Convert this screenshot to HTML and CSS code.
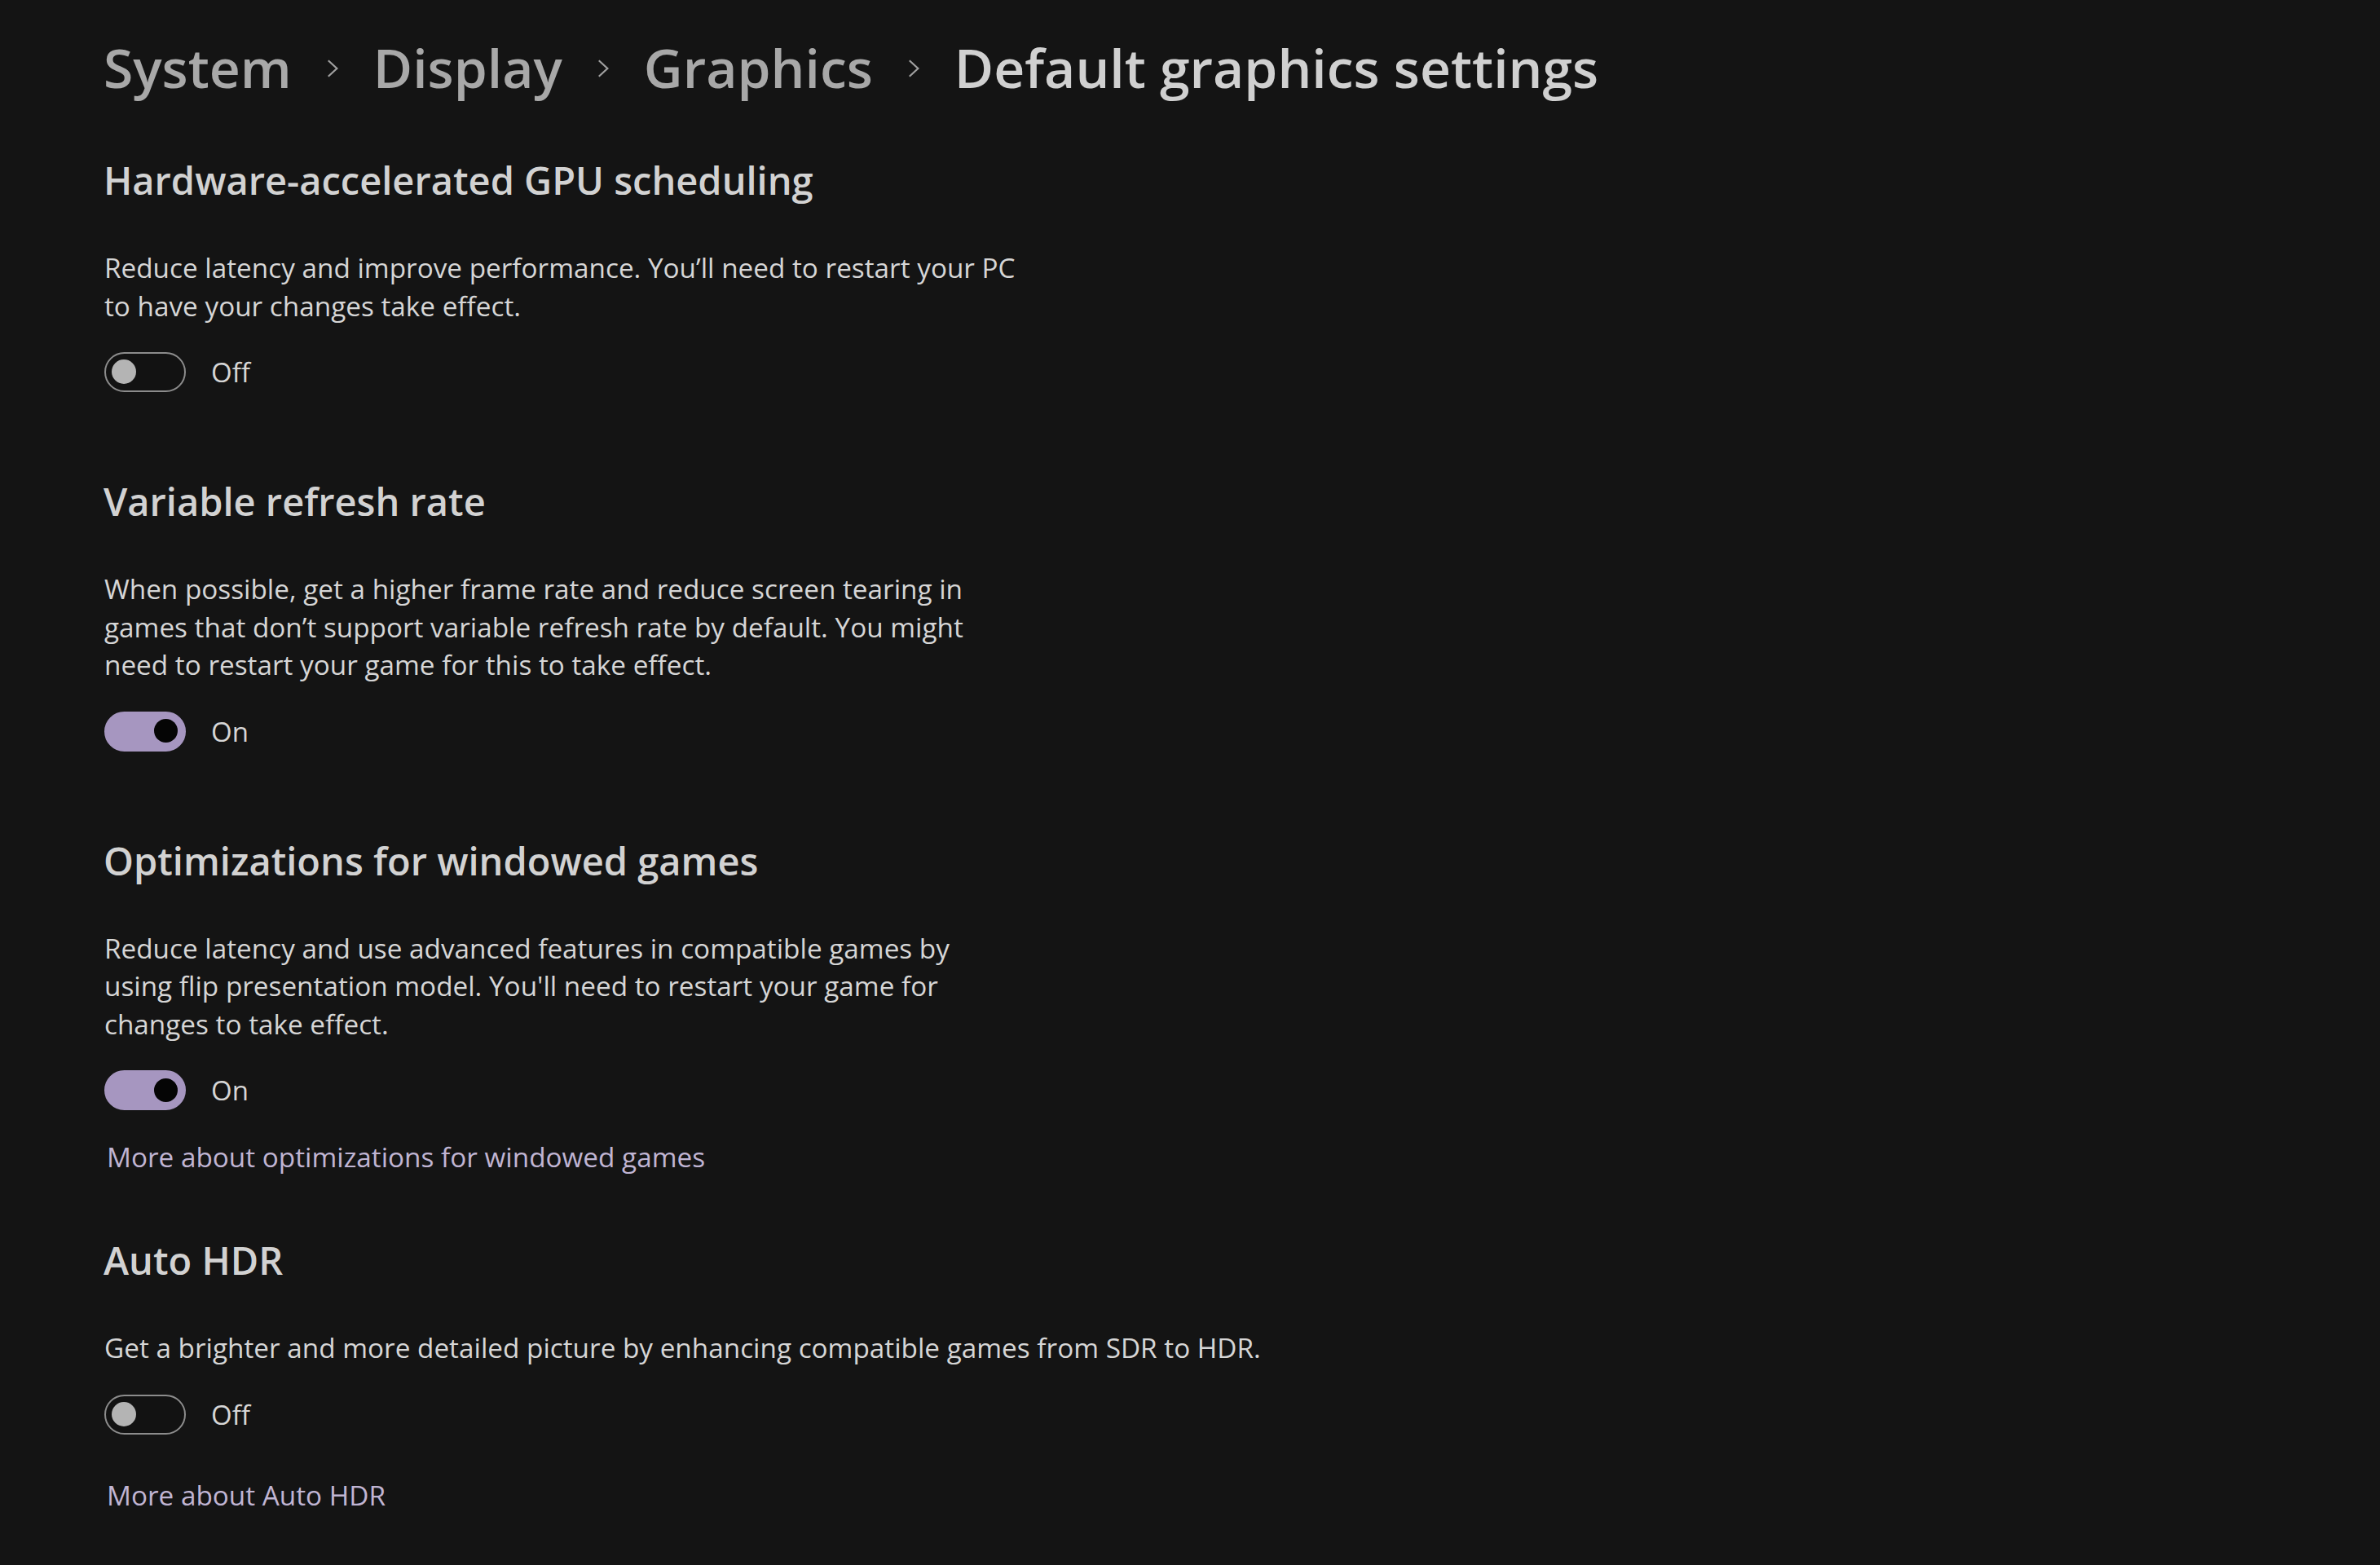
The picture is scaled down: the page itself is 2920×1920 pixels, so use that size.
FILE: index.html
```html
<!DOCTYPE html>
<html lang="en">
<head>
<meta charset="UTF-8">
<title>Default graphics settings</title>
<link rel="stylesheet" href="styles.css">
</head>
<body>
<div class="page">
    <nav class="breadcrumb">
        <span class="crumb">System</span>
        <svg class="chevron" viewBox="0 0 17 26"><path d="M2 2 L14 13 L2 24" /></svg>
        <span class="crumb">Display</span>
        <svg class="chevron" viewBox="0 0 17 26"><path d="M2 2 L14 13 L2 24" /></svg>
        <span class="crumb">Graphics</span>
        <svg class="chevron" viewBox="0 0 17 26"><path d="M2 2 L14 13 L2 24" /></svg>
        <span class="crumb current">Default graphics settings</span>
    </nav>

    <section class="setting">
        <h2>Hardware-accelerated GPU scheduling</h2>
        <p>Reduce latency and improve performance. You’ll need to restart your PC to have your changes take effect.</p>
        <div class="toggle-row">
            <span class="toggle"></span>
            <span class="toggle-label">Off</span>
        </div>
    </section>

    <section class="setting">
        <h2>Variable refresh rate</h2>
        <p>When possible, get a higher frame rate and reduce screen tearing in games that don’t support variable refresh rate by default. You might need to restart your game for this to take effect.</p>
        <div class="toggle-row">
            <span class="toggle on"></span>
            <span class="toggle-label">On</span>
        </div>
    </section>

    <section class="setting">
        <h2>Optimizations for windowed games</h2>
        <p>Reduce latency and use advanced features in compatible games by using flip presentation model. You'll need to restart your game for changes to take effect.</p>
        <div class="toggle-row">
            <span class="toggle on"></span>
            <span class="toggle-label">On</span>
        </div>
        <a class="more" href="#">More about optimizations for windowed games</a>
    </section>

    <section class="setting">
        <h2>Auto HDR</h2>
        <p class="wide">Get a brighter and more detailed picture by enhancing compatible games from SDR to HDR.</p>
        <div class="toggle-row">
            <span class="toggle"></span>
            <span class="toggle-label">Off</span>
        </div>
        <a class="more last" href="#">More about Auto HDR</a>
    </section>
</div>
</body>
</html>
```

FILE: styles.css
```css
body {
    margin: 0;
    background-color: #141414;
    font-family: "Open Sans", "Noto Sans", sans-serif;
    color: #d6d6d6;
}
.page {
    padding: 47px 0 0 127px;
}
.breadcrumb {
    display: flex;
    align-items: center;
    height: 70px;
    font-size: 66px;
    font-weight: 600;
    color: #a8a8a8;
}
.crumb.current {
    color: #d0d0d0;
}
.chevron {
    width: 15px;
    height: 24px;
    margin: 4px 42px 0 43px;
    fill: none;
    stroke: #a0a0a0;
    stroke-width: 2.5;
}
.setting {
    display: flow-root;
    margin-top: 69px;
}
.setting h2 {
    margin: 0;
    font-size: 47px;
    font-weight: 600;
    line-height: 70px;
    color: #d2d2d2;
}
.setting p {
    max-width: 1120px;
    margin: 49px 0 0 1px;
    font-size: 33.3px;
    line-height: 46.5px;
}
.setting p.wide {
    max-width: none;
}
.toggle-row {
    display: flex;
    align-items: center;
    margin: 34px 0 0 1px;
}
.toggle-row:last-child {
    margin-bottom: 30px;
}
.toggle {
    position: relative;
    width: 100px;
    height: 49px;
    box-sizing: border-box;
    border: 2.5px solid #8c8c8c;
    border-radius: 25px;
    background-color: #121212;
}
.toggle::after {
    content: "";
    position: absolute;
    left: 7px;
    top: 7px;
    width: 30px;
    height: 30px;
    border-radius: 50%;
    background-color: #b4b4b4;
}
.toggle.on {
    border-color: #a696c0;
    background-color: #a696c0;
}
.toggle.on::after {
    left: auto;
    right: 8px;
    width: 29px;
    height: 29px;
    top: 7.5px;
    background-color: #050505;
}
.toggle-label {
    margin-left: 31px;
    font-size: 33px;
}
.more {
    display: block;
    margin: 34px 0 0 4px;
    font-size: 33.3px;
    line-height: 46px;
    color: #c0b5d3;
    text-decoration: none;
}
.more.last {
    margin-top: 51px;
}
```
